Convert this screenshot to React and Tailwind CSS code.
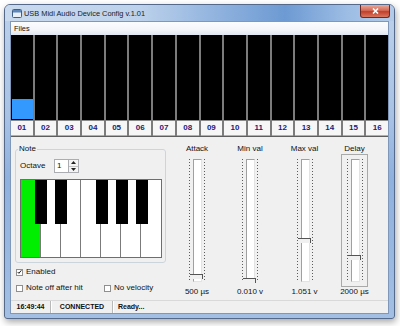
import React from "react";

const CHANNELS = ["01", "02", "03", "04", "05", "06", "07", "08", "09", "10", "11", "12", "13", "14", "15", "16"];

const SLIDERS = [
  { label: "Attack", value: "500 µs", col: "w-[54px]", thumb: "top-[114px]", focus: false },
  { label: "Min val", value: "0.010 v", col: "w-[52px]", thumb: "top-[118px]", focus: false },
  { label: "Max val", value: "1.051 v", col: "w-[57px]", thumb: "top-[78px]", focus: false },
  { label: "Delay", value: "2000 µs", col: "w-[43px]", thumb: "top-[95px]", focus: true },
];

const BLACK_KEYS = ["left-[14px]", "left-[34px]", "left-[75px]", "left-[95px]", "left-[115px]"];

const TICKS = Array.from({ length: 41 });

function Ticks() {
  return (
    <div className="flex flex-col gap-[2px] w-[1px]">
      {TICKS.map((_, i) => (
        <div key={i} className="h-[1px] w-[1px] bg-[#5c5c5c]" />
      ))}
    </div>
  );
}

function Slider({ s }) {
  return (
    <div className={`${s.col} flex flex-col items-center pt-[7px]`}>
      <span className="text-[8px] leading-[10px] h-[10px] whitespace-nowrap">{s.label}</span>
      <div
        className={`h-[133px] w-[27px] border flex justify-center pt-[4px] ${s.focus ? "border-[#a9a9a9]" : "border-transparent"}`}
      >
        <div className="flex h-[123px]">
          <Ticks />
          <div className="relative ml-[3px] mr-[2px] w-[9px] h-[123px] bg-white border border-[#a0a0a0] border-r-[#e3e3e3] border-b-[#e3e3e3]">
            <div className={`absolute -left-[4px] ${s.thumb} w-[13px] h-[5px] bg-[#f0f0f0] border-t border-r border-[#555]`} />
          </div>
          <Ticks />
        </div>
      </div>
      <span className="text-[8px] leading-[10px] h-[10px] whitespace-nowrap">{s.value}</span>
    </div>
  );
}

function Check({ checked, children }) {
  return (
    <label className="flex items-center gap-[3px] text-[8px] leading-[10px]">
      <span className="w-[7px] h-[7px] border border-[#8f8f8f] bg-white flex items-center justify-center">
        {checked && (
          <svg width="6" height="6" viewBox="0 0 6 6">
            <path d="M0.8 3 L2.3 4.6 L5.2 1" fill="none" stroke="#1a1a1a" strokeWidth="1.2" />
          </svg>
        )}
      </span>
      <span>{children}</span>
    </label>
  );
}

export default function App() {
  return (
    <div className="w-[400px] h-[326px] bg-white pt-[4px] pl-[4px] font-['Liberation_Sans',Arial,sans-serif] text-[#111]">
      <div className="w-[391px] h-[315px] rounded-t-[6px] rounded-b-[3px] border border-[#55698a] bg-[linear-gradient(to_bottom,#bcd1ea,#a9c3e5_35%,#8fb1de_55%,#a3bfe3)] shadow-[1px_3px_7px_rgba(0,0,0,0.35)] flex flex-col overflow-hidden">
        {/* title bar */}
        <div className="h-[16px] flex items-start bg-[linear-gradient(to_right,#c9daee,#bcd1eb_35%,#8fb2de_55%,#6d9ad3_72%,#9dbde4_88%,#b4cbe8)]">
          <svg className="ml-[7px] mt-[4px]" width="10" height="9" viewBox="0 0 10 9">
            <rect x="0.5" y="0.5" width="9" height="8" rx="1" fill="#e9eff6" stroke="#3f5e86" />
            <rect x="1" y="1" width="8" height="2.5" fill="#5d86b9" />
          </svg>
          <span className="ml-[2px] mt-[4px] text-[7.4px] leading-[10px] text-[#1b1b1b] whitespace-nowrap">
            USB Midi Audio Device Config v.1.01
          </span>
          <div className="ml-auto mr-[4px] w-[30px] h-[13px] rounded-b-[3px] border border-t-0 border-[#6e2a22] bg-[linear-gradient(to_bottom,#e9a99b,#d46a56_45%,#c23f2b_55%,#d9775f)] flex items-center justify-center">
            <svg width="7" height="6" viewBox="0 0 7 6">
              <path d="M1 0.5 L6 5.5 M6 0.5 L1 5.5" stroke="#fff" strokeWidth="1.6" />
            </svg>
          </div>
        </div>

        {/* client */}
        <div className="flex-1 mx-[5px] mb-[4px] border border-[#7f98ba] flex flex-col bg-[#f0f0f0]">
          {/* menu */}
          <div className="h-[13px] flex items-center pl-[3px] bg-[linear-gradient(to_bottom,#fbfcfe,#f3f5f9_60%,#dfe6f0)]">
            <span className="text-[7.4px] leading-[10px]">Files</span>
          </div>

          {/* channels */}
          <div className="h-[102px] grid grid-cols-16 gap-x-[2px] bg-[#7c7c7c] border-b border-[#5e5e5e]">
            {CHANNELS.map((c, i) => (
              <div key={c} className="flex flex-col">
                <div className="flex-1 bg-black flex flex-col justify-end">
                  {i === 0 && <div className="h-[20px] ml-[1px] mb-[1px] bg-[#3399ff]" />}
                </div>
                <div className="h-[16px] border-t border-[#8a8a8a] bg-[#f6f6f6] border-b border-b-[#b0b0b0] flex items-center justify-center">
                  <span className="text-[8px] leading-[10px] font-bold text-[#1c1c7a]">{c}</span>
                </div>
              </div>
            ))}
          </div>

          {/* main panel */}
          <div className="h-[163px] flex">
            <div className="w-[152px] ml-[4px] pt-[7px] flex flex-col">
              <fieldset className="w-[151px] border border-[#cdd5dc] rounded-[3px] pl-[4px] pr-[3px] pb-[4px]">
                <legend className="-ml-[2px] px-[1px] text-[8px] leading-[10px]">Note</legend>
                <div className="mt-[5px] h-[14px] flex items-center">
                  <span className="w-[34px] text-[8px] leading-[10px]">Octave</span>
                  <div className="h-[14px] w-[14px] bg-white border border-[#abadb3] border-r-0 pl-[2px] text-[8px] leading-[12px]">
                    1
                  </div>
                  <div className="h-[14px] w-[11px] border border-[#abadb3] flex flex-col bg-[#f4f4f4]">
                    <div className="flex-1 flex items-center justify-center border-b border-[#c4c4c4]">
                      <svg width="5" height="3" viewBox="0 0 5 3">
                        <path d="M0 3 L2.5 0 L5 3 Z" fill="#222" />
                      </svg>
                    </div>
                    <div className="flex-1 flex items-center justify-center">
                      <svg width="5" height="3" viewBox="0 0 5 3">
                        <path d="M0 0 L2.5 3 L5 0 Z" fill="#222" />
                      </svg>
                    </div>
                  </div>
                </div>
                <div className="mt-[6px] relative w-[142px] h-[79px] border border-[#6e6e6e] grid grid-cols-7 bg-white">
                  {Array.from({ length: 7 }).map((_, i) => (
                    <div
                      key={i}
                      className={`${i === 0 ? "bg-[#00ee00]" : "bg-white"} ${i < 6 ? "border-r border-[#7b7b7b]" : ""}`}
                    />
                  ))}
                  {BLACK_KEYS.map((k) => (
                    <div key={k} className={`absolute top-0 ${k} w-[12px] h-[44px] bg-black`} />
                  ))}
                </div>
              </fieldset>
              <div className="mt-[4px] pl-[1px]">
                <Check checked>Enabled</Check>
              </div>
              <div className="mt-[6px] pl-[1px] flex">
                <div className="w-[88px]">
                  <Check>Note off after hit</Check>
                </div>
                <Check>No velocity</Check>
              </div>
            </div>

            <div className="ml-[3px] flex">
              {SLIDERS.map((s) => (
                <Slider key={s.label} s={s} />
              ))}
            </div>
          </div>

          {/* status bar */}
          <div className="h-[13px] flex border-t border-[#d9d9d9] text-[7px] leading-[10px] font-bold">
            <div className="w-[40px] flex items-center justify-center border-r border-[#b9b9b9]">16:49:44</div>
            <div className="w-[62px] flex items-center justify-center border-l border-white border-r border-r-[#b9b9b9]">
              CONNECTED
            </div>
            <div className="flex-1 flex items-center pl-[4px] border-l border-white">Ready...</div>
          </div>
        </div>
      </div>
    </div>
  );
}
